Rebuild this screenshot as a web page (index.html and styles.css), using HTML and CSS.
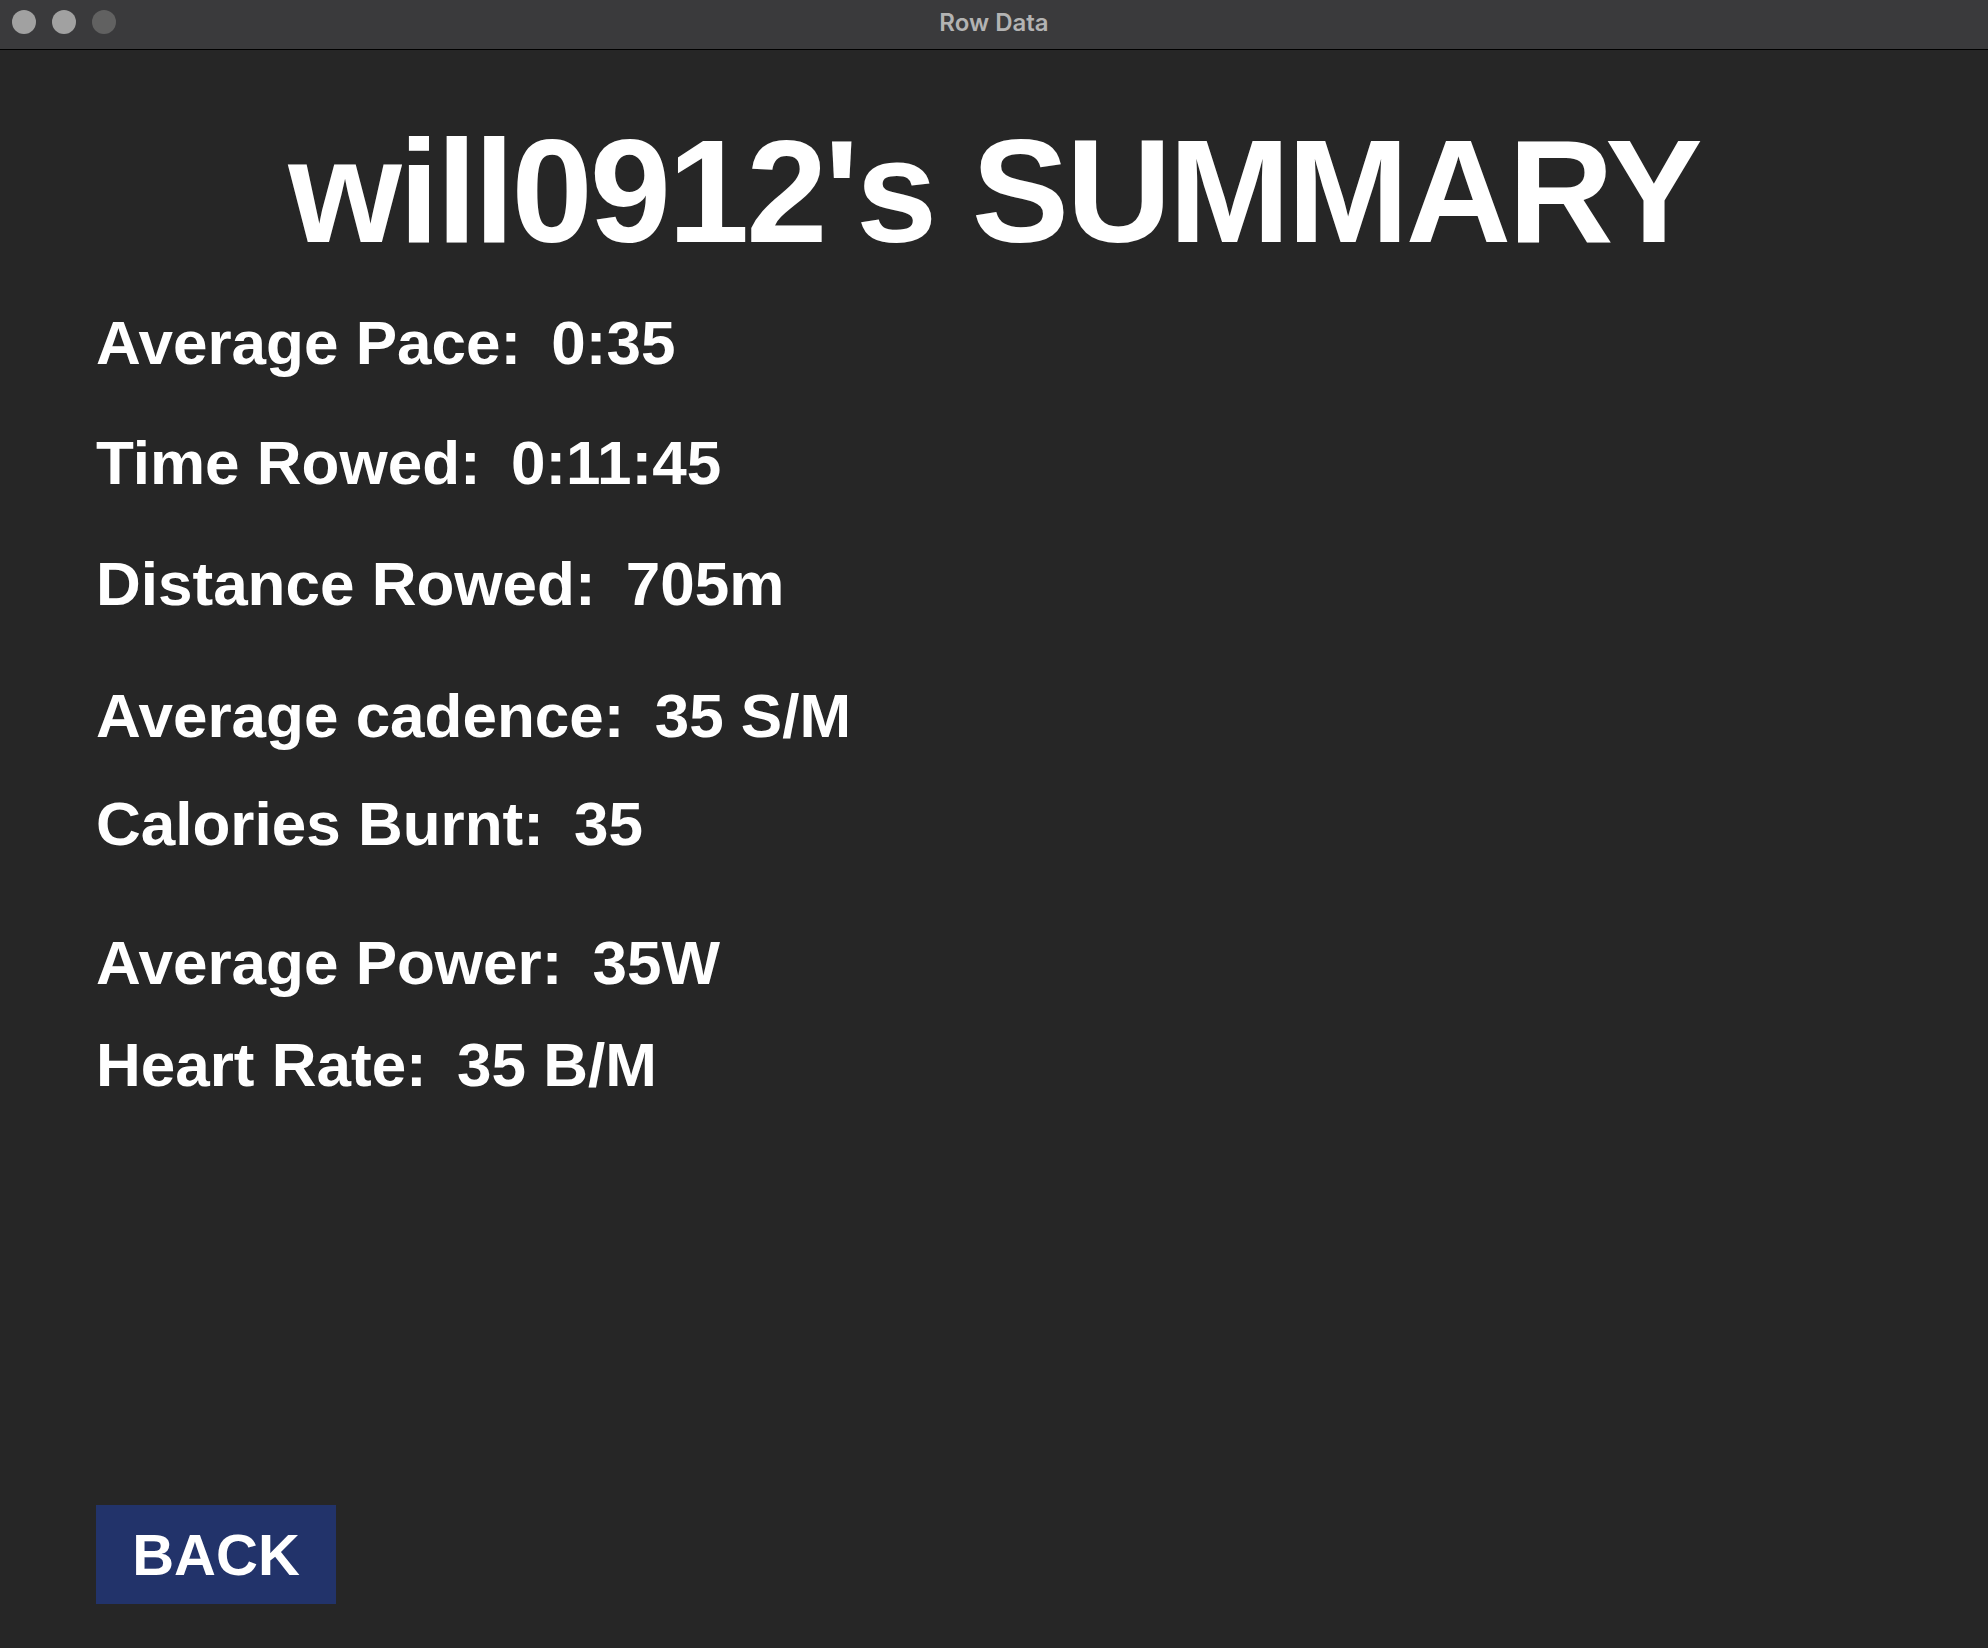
FILE: index.html
```html
<!DOCTYPE html>
<html lang="en">
<head>
<meta charset="utf-8">
<title>Row Data</title>
<link rel="stylesheet" href="styles.css">
</head>
<body>
<div class="window">
  <header class="titlebar">
    <div class="lights">
      <span class="light"></span>
      <span class="light"></span>
      <span class="light light--off"></span>
    </div>
    <div class="title">Row Data</div>
  </header>
  <main class="content">
    <h1 class="heading">will0912's SUMMARY</h1>
    <div class="stats">
      <div class="stat stat--pace">Average Pace: <span class="val">0:35</span></div>
      <div class="stat stat--time">Time Rowed: <span class="val">0:11:45</span></div>
      <div class="stat stat--dist">Distance Rowed: <span class="val">705m</span></div>
      <div class="stat stat--cad">Average cadence: <span class="val">35 S/M</span></div>
      <div class="stat stat--cal">Calories Burnt: <span class="val">35</span></div>
      <div class="stat stat--pow">Average Power: <span class="val">35W</span></div>
      <div class="stat stat--hr">Heart Rate: <span class="val">35 B/M</span></div>
    </div>
    <div class="footer">
      <button class="back">BACK</button>
    </div>
  </main>
</div>
</body>
</html>
```

FILE: styles.css
```css
html, body {
  margin: 0;
  padding: 0;
  background: #262626;
}

.window {
  width: 1988px;
  height: 1648px;
  display: flex;
  flex-direction: column;
  background: #262626;
  overflow: hidden;
}

.titlebar {
  height: 49px;
  flex: 0 0 49px;
  border-bottom: 1px solid #000;
  background: #3a3a3c;
  position: relative;
  display: flex;
  align-items: center;
  justify-content: center;
}

.lights {
  position: absolute;
  left: 12px;
  top: 10px;
  display: flex;
  gap: 16px;
}

.light {
  width: 24px;
  height: 24px;
  border-radius: 50%;
  background: #a1a1a1;
}

.light--off {
  background: #616161;
}

.title {
  font-family: Inter, "Liberation Sans", sans-serif;
  font-weight: 600;
  font-size: 24px;
  color: #b3b3b3;
  margin-top: -4px;
}

.content {
  flex: 1;
  display: flex;
  flex-direction: column;
  padding: 0 96px 44px 96px;
  color: #ffffff;
  font-family: "Liberation Sans", Arial, sans-serif;
  font-weight: bold;
}

.heading {
  margin: 69px 0 0 0;
  font-size: 146px;
  line-height: 146px;
  text-align: center;
  font-weight: bold;
  letter-spacing: -3px;
  white-space: nowrap;
}

.stats {
  display: flex;
  flex-direction: column;
  margin-top: 47px;
}

.stat {
  font-size: 62px;
  line-height: 62px;
  height: 62px;
  white-space: nowrap;
}

.val {
  margin-left: 13px;
}

.stat--time { margin-top: 58px; }
.stat--dist { margin-top: 59px; }
.stat--cad  { margin-top: 70px; }
.stat--cal  { margin-top: 46px; }
.stat--pow  { margin-top: 77px; }
.stat--hr   { margin-top: 40px; }

.footer {
  margin-top: auto;
  display: flex;
}

.back {
  width: 240px;
  height: 99px;
  border: none;
  padding: 0;
  background: #22336a;
  color: #ffffff;
  font-family: "Liberation Sans", Arial, sans-serif;
  font-weight: bold;
  font-size: 58px;
  line-height: 99px;
  text-align: center;
}
```
